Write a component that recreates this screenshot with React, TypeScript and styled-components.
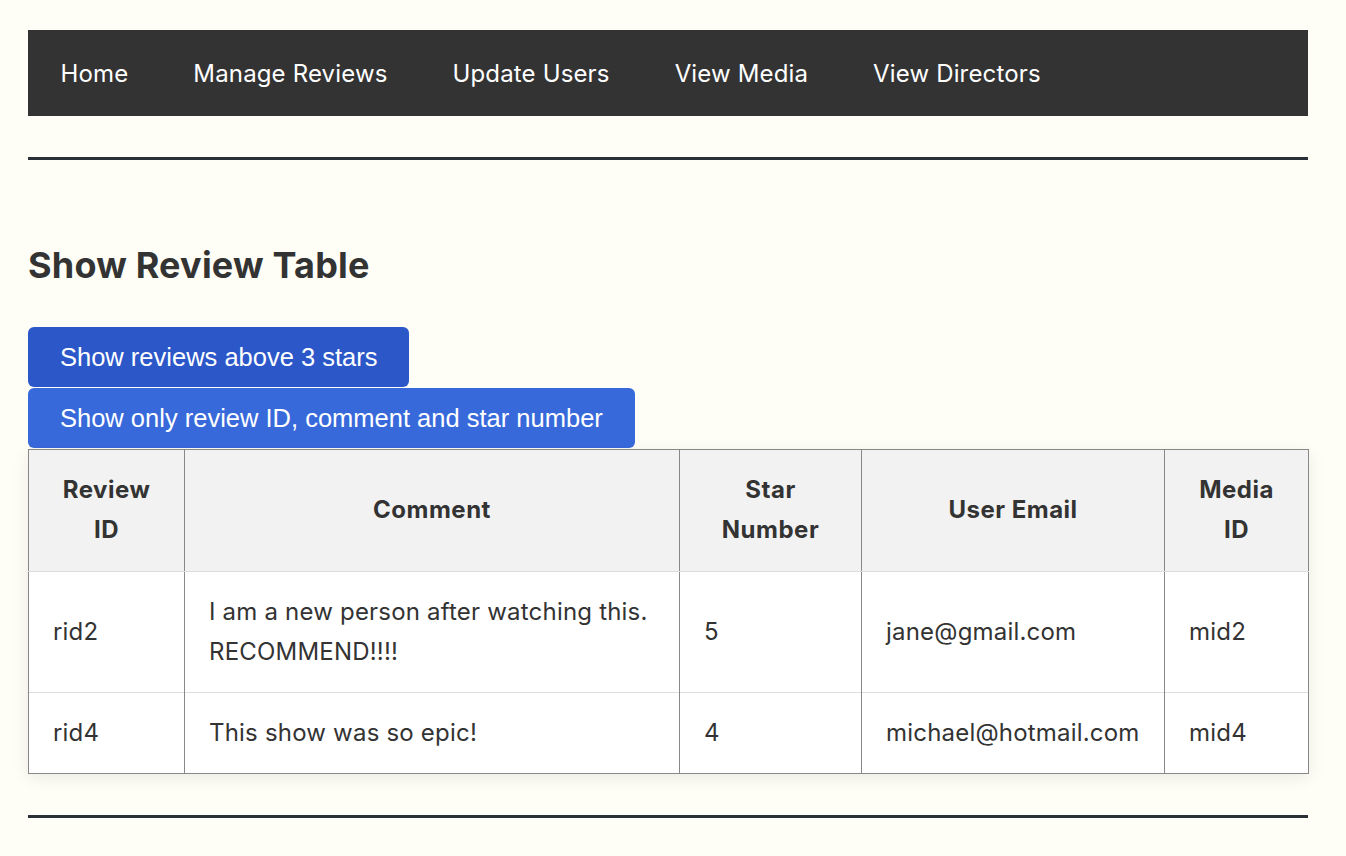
import React from "react";
import styled, { createGlobalStyle } from "styled-components";

const GlobalStyle = createGlobalStyle`
  html, body { margin: 0; padding: 0; background: #fefef6; }
  body { font-family: Inter, "Noto Sans", sans-serif; color: #333; }
`;

const Page = styled.div`
  padding: 30px 38px 40px 28px;
  display: flex;
  flex-direction: column;
`;

const Nav = styled.nav`
  background: #333333;
  height: 86px;
  display: flex;
  align-items: center;
`;

const NavLink = styled.a`
  color: #ffffff;
  font-family: Inter, sans-serif;
  font-size: 24px;
  letter-spacing: 0.15px;
  padding: 0 32.5px;
  text-decoration: none;
`;

const Rule = styled.hr<{ $top: number }>`
  border: none;
  height: 3px;
  background: #2b2f36;
  margin: ${(p) => p.$top}px 0 0 0;
`;

const Heading = styled.h2`
  font-family: Inter, sans-serif;
  font-size: 36px;
  font-weight: 700;
  color: #333;
  margin: 84px 0 40px 0;
  line-height: 43px;
  letter-spacing: 0.2px;
`;

const ButtonStack = styled.div`
  display: flex;
  flex-direction: column;
  align-items: flex-start;
  gap: 1px;
`;

const Button = styled.button<{ $tone: string }>`
  background: ${(p) => p.$tone};
  color: #fff;
  border: none;
  border-radius: 6px;
  font-family: "Liberation Sans", Arial, sans-serif;
  font-size: 25.5px;
  height: 60px;
  padding: 0 32px;
  cursor: pointer;
`;

const Table = styled.table`
  width: 100%;
  margin-top: 1px;
  table-layout: fixed;
  border-collapse: collapse;
  border: 1px solid #888;
  box-shadow: 0 4px 16px rgba(0, 0, 0, 0.08);
  font-family: Inter, sans-serif;
  font-size: 24px;
  color: #333;
`;

const Th = styled.th<{ $w: number }>`
  box-sizing: border-box;
  width: ${(p) => p.$w}px;
  background: #f2f2f2;
  font-weight: 700;
  line-height: 40px;
  padding: 20px 24px 21px 24px;
  letter-spacing: 0.5px;
  border-left: 1px solid #888;
  border-right: 1px solid #888;
  border-bottom: 1px solid #ddd;
  text-align: center;
`;

const Row = styled.tr`
  background: #fff;
  & + & td { border-top: 1px solid #ddd; }
`;

const Td = styled.td`
  line-height: 40px;
  padding: 20px 24px;
  letter-spacing: 0.2px;
  border-left: 1px solid #888;
  border-right: 1px solid #888;
  text-align: left;
`;

const links = ["Home", "Manage Reviews", "Update Users", "View Media", "View Directors"];

const headers: [string, number][] = [
  ["Review ID", 156],
  ["Comment", 495],
  ["Star Number", 182],
  ["User Email", 303],
  ["Media ID", 144],
];

const rows = [
  ["rid2", "I am a new person after watching this. RECOMMEND!!!!", "5", "jane@gmail.com", "mid2"],
  ["rid4", "This show was so epic!", "4", "michael@hotmail.com", "mid4"],
];

export default function App() {
  return (
    <>
      <GlobalStyle />
      <Page>
        <Nav>
          {links.map((l) => (
            <NavLink key={l} href="#">
              {l}
            </NavLink>
          ))}
        </Nav>
        <Rule $top={41} />
        <Heading>Show Review Table</Heading>
        <ButtonStack>
          <Button $tone="#2b57c9">Show reviews above 3 stars</Button>
          <Button $tone="#3869db">Show only review ID, comment and star number</Button>
        </ButtonStack>
        <Table>
          <thead>
            <tr>
              {headers.map(([h, w]) => (
                <Th key={h} $w={w}>
                  {h}
                </Th>
              ))}
            </tr>
          </thead>
          <tbody>
            {rows.map((r) => (
              <Row key={r[0]}>
                {r.map((c, i) => (
                  <Td key={i}>{c}</Td>
                ))}
              </Row>
            ))}
          </tbody>
        </Table>
        <Rule $top={41} />
      </Page>
    </>
  );
}
